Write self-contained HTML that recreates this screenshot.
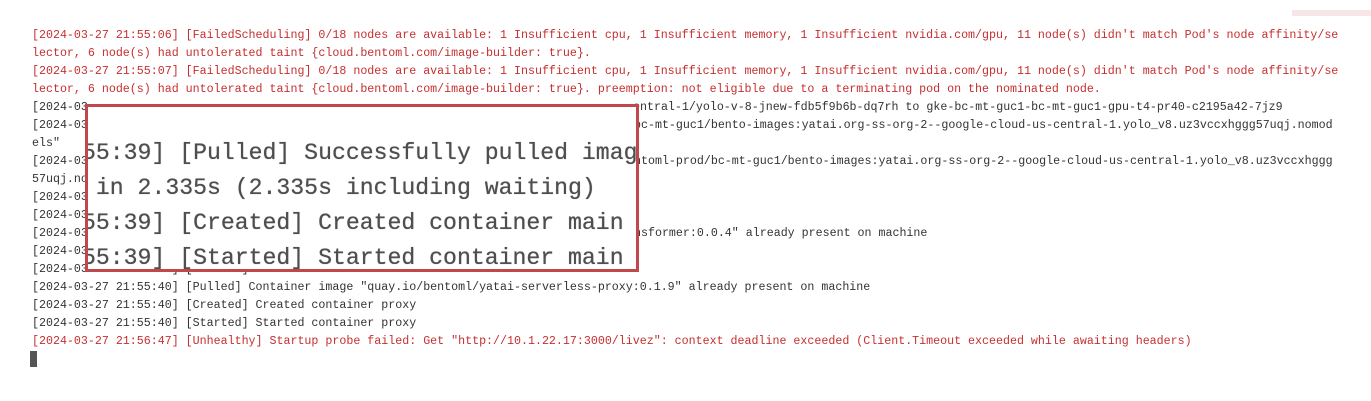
<!DOCTYPE html>
<html><head><meta charset="utf-8"><style>
html,body{margin:0;padding:0;background:#fff;width:1371px;height:401px;overflow:hidden;position:relative}
.l{position:absolute;white-space:pre;font-family:"Liberation Mono",monospace;font-size:11.65px;line-height:18px;color:#333;letter-spacing:0}
.r{color:#c62f2f}
#box{position:absolute;left:85px;top:104px;width:548px;height:162px;border:3px solid #c0474a;background:#fff;overflow:hidden}
.b{position:absolute;white-space:pre;font-family:"Liberation Mono",monospace;font-size:23.15px;line-height:30px;color:#4e4e4e;left:-6px;text-shadow:0 0 0.6px #4e4e4e}
#cur{position:absolute;left:30px;top:351px;width:7px;height:16px;background:#555}
#tr{position:absolute;left:1292px;top:10px;width:79px;height:6px;background:#f7e6e6}
</style></head><body>
<div id="tr"></div>
<div class="l r" style="left:32px;top:27px">[2024-03-27 21:55:06] [FailedScheduling] 0/18 nodes are available: 1 Insufficient cpu, 1 Insufficient memory, 1 Insufficient nvidia.com/gpu, 11 node(s) didn't match Pod's node affinity/se</div>
<div class="l r" style="left:32px;top:45px">lector, 6 node(s) had untolerated taint {cloud.bentoml.com/image-builder: true}.</div>
<div class="l r" style="left:32px;top:63px">[2024-03-27 21:55:07] [FailedScheduling] 0/18 nodes are available: 1 Insufficient cpu, 1 Insufficient memory, 1 Insufficient nvidia.com/gpu, 11 node(s) didn't match Pod's node affinity/se</div>
<div class="l r" style="left:32px;top:81px">lector, 6 node(s) had untolerated taint {cloud.bentoml.com/image-builder: true}. preemption: not eligible due to a terminating pod on the nominated node.</div>
<div class="l" style="left:32px;top:99px">[2024-03</div>
<div class="l" style="left:633px;top:99px">entral-1/yolo-v-8-jnew-fdb5f9b6b-dq7rh to gke-bc-mt-guc1-bc-mt-guc1-gpu-t4-pr40-c2195a42-7jz9</div>
<div class="l" style="left:32px;top:117px">[2024-03</div>
<div class="l" style="left:634px;top:117px">bc-mt-guc1/bento-images:yatai.org-ss-org-2--google-cloud-us-central-1.yolo_v8.uz3vccxhggg57uqj.nomod</div>
<div class="l" style="left:32px;top:135px">els"</div>
<div class="l" style="left:32px;top:153px">[2024-03</div>
<div class="l" style="left:634px;top:153px">ntoml-prod/bc-mt-guc1/bento-images:yatai.org-ss-org-2--google-cloud-us-central-1.yolo_v8.uz3vccxhggg</div>
<div class="l" style="left:32px;top:171px">57uqj.no</div>
<div class="l" style="left:32px;top:189px">[2024-03</div>
<div class="l" style="left:32px;top:207px">[2024-03</div>
<div class="l" style="left:32px;top:225px">[2024-03</div>
<div class="l" style="left:634px;top:225px">nsformer:0.0.4" already present on machine</div>
<div class="l" style="left:32px;top:243px">[2024-03</div>
<div class="l" style="left:32px;top:261px">[2024-03-27 21:55:40] [Started] Started container metrics-transformer</div>
<div class="l" style="left:32px;top:279px">[2024-03-27 21:55:40] [Pulled] Container image "quay.io/bentoml/yatai-serverless-proxy:0.1.9" already present on machine</div>
<div class="l" style="left:32px;top:297px">[2024-03-27 21:55:40] [Created] Created container proxy</div>
<div class="l" style="left:32px;top:315px">[2024-03-27 21:55:40] [Started] Started container proxy</div>
<div class="l r" style="left:32px;top:333px">[2024-03-27 21:56:47] [Unhealthy] Startup probe failed: Get "http://10.1.22.17:3000/livez": context deadline exceeded (Client.Timeout exceeded while awaiting headers)</div>
<div id="cur"></div>
<div id="box">
<div class="b" style="top:31px">55:39] [Pulled] Successfully pulled imag</div>
<div class="b" style="top:66px"> in 2.335s (2.335s including waiting)</div>
<div class="b" style="top:101px">55:39] [Created] Created container main</div>
<div class="b" style="top:136px">55:39] [Started] Started container main</div>
</div>
</body></html>
